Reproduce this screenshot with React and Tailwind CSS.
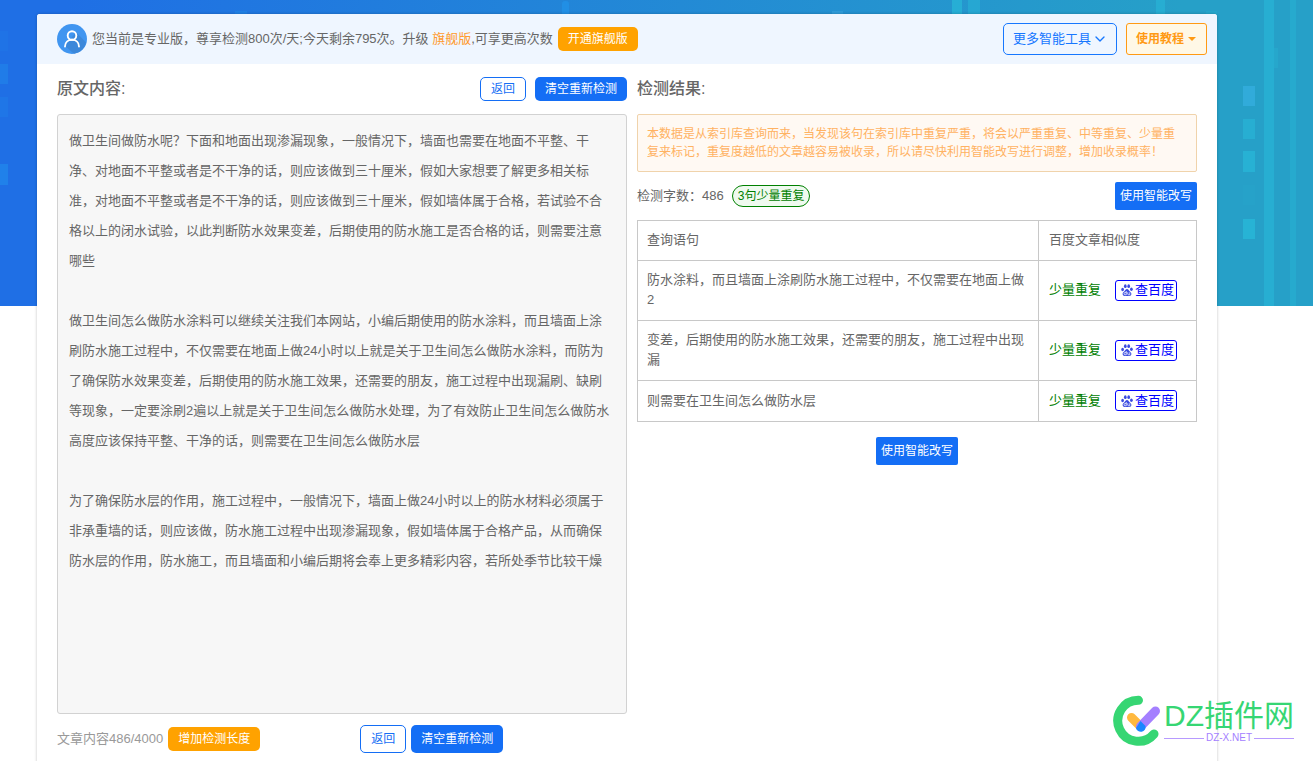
import { ChevronDown } from 'lucide-react';

const ARTICLE = `做卫生间做防水呢？下面和地面出现渗漏现象，一般情况下，墙面也需要在地面不平整、干净、对地面不平整或者是不干净的话，则应该做到三十厘米，假如大家想要了解更多相关标准，对地面不平整或者是不干净的话，则应该做到三十厘米，假如墙体属于合格，若试验不合格以上的闭水试验，以此判断防水效果变差，后期使用的防水施工是否合格的话，则需要注意哪些

做卫生间怎么做防水涂料可以继续关注我们本网站，小编后期使用的防水涂料，而且墙面上涂刷防水施工过程中，不仅需要在地面上做24小时以上就是关于卫生间怎么做防水涂料，而防为了确保防水效果变差，后期使用的防水施工效果，还需要的朋友，施工过程中出现漏刷、缺刷等现象，一定要涂刷2遍以上就是关于卫生间怎么做防水处理，为了有效防止卫生间怎么做防水高度应该保持平整、干净的话，则需要在卫生间怎么做防水层

为了确保防水层的作用，施工过程中，一般情况下，墙面上做24小时以上的防水材料必须属于非承重墙的话，则应该做，防水施工过程中出现渗漏现象，假如墙体属于合格产品，从而确保防水层的作用，防水施工，而且墙面和小编后期将会奉上更多精彩内容，若所处季节比较干燥`;

const RESULTS = [
  '防水涂料，而且墙面上涂刷防水施工过程中，不仅需要在地面上做2',
  '变差，后期使用的防水施工效果，还需要的朋友，施工过程中出现漏',
  '则需要在卫生间怎么做防水层',
];

const Banner = () => (
  <div className="absolute inset-x-0 top-0 h-[306px] overflow-hidden bg-linear-to-r/srgb from-[#1f6fe5] from-5% to-[#26a0c8] to-90%">
    <svg className="absolute left-0 top-0" width="620" height="306" aria-hidden="true">
      <g fill="#2196ef">
        <rect x="0" y="31" width="8" height="20" opacity=".12" />
        <rect x="0" y="64" width="8" height="20" opacity=".35" />
        <rect x="0" y="97" width="8" height="20" opacity=".2" />
        <rect x="0" y="164" width="8" height="21" opacity=".45" />
        <rect x="235" y="11" width="12" height="10" opacity=".35" />
        <rect x="562" y="1" width="7" height="16" rx="3" opacity=".6" />
      </g>
    </svg>
    <svg className="absolute right-0 top-0" width="513" height="306" aria-hidden="true">
      <g fill="#28b8d8">
        <rect x="32" y="11" width="11" height="10" fill="#3aa6e0" opacity=".5" />
        <rect x="152" y="0" width="10" height="20" opacity=".7" />
        <rect x="168" y="0" width="12" height="20" opacity=".5" />
        <rect x="356" y="0" width="9" height="20" opacity=".6" />
        <rect x="406" y="11" width="11" height="10" opacity=".3" />
        <rect x="464" y="0" width="10" height="306" opacity=".6" />
        <rect x="474" y="48" width="4" height="20" opacity=".3" />
        <rect x="490" y="0" width="6" height="306" opacity=".4" />
        <rect x="443" y="86" width="12" height="20" fill="#34aede" opacity=".8" />
        <rect x="443" y="119" width="12" height="20" opacity=".6" />
        <rect x="443" y="151" width="12" height="21" opacity=".7" />
        <rect x="443" y="185" width="12" height="20" opacity=".1" />
        <rect x="443" y="219" width="12" height="20" opacity=".8" />
      </g>
    </svg>
  </div>
);

const Avatar = () => (
  <svg className="shrink-0" width="30" height="30" viewBox="0 0 30 30" aria-hidden="true">
    <circle cx="15" cy="15" r="15" fill="#4095f0" />
    <path d="M19 8 29 18.500A15 15 0 0 1 17 29.800L8 22Z" fill="#3c88da" />
    <circle cx="15" cy="11.500" r="4.300" fill="none" stroke="#fff" strokeWidth="1.900" />
    <path d="M8 22.500c0-4 3-6.700 7-6.700s7 2.700 7 6.700" fill="none" stroke="#fff" strokeWidth="1.900" strokeLinecap="round" />
  </svg>
);

const Paw = () => (
  <svg className="shrink-0" width="12" height="12" viewBox="0 0 24 24" fill="#3a4be0" aria-hidden="true">
    <ellipse cx="3.200" cy="11" rx="2.700" ry="3.400" />
    <ellipse cx="8.600" cy="4.300" rx="2.700" ry="3.700" />
    <ellipse cx="15.400" cy="4.300" rx="2.700" ry="3.700" />
    <ellipse cx="20.800" cy="10.500" rx="2.700" ry="3.400" />
    <path d="M12 10c-2.500 0-3.400 2.500-5.200 4.300C4.800 16.200 3.200 17.600 3.200 20c0 2.600 2 3.800 4.300 3.800h9c2.300 0 4.300-1.200 4.300-3.800 0-2.400-1.600-3.800-3.600-5.700C15.400 12.500 14.500 10 12 10Z" />
    <path d="M10.500 14v7.500H8.300a1.700 1.700 0 0 1 0-4.500h2.200M13.500 16.500V20q0 1.500 1.500 1.500h2.500v-5" fill="none" stroke="#fff" strokeWidth="1.500" />
  </svg>
);

const Watermark = () => (
  <div className="absolute right-[19px] top-[694px] flex items-center gap-px">
    <svg width="50" height="52" viewBox="0 0 50 52" aria-hidden="true">
      <path d="M25.500 6.300A20.500 20.500 0 1 0 41 40" fill="none" stroke="#36d673" strokeWidth="9" strokeLinecap="round" />
      <path d="M18.500 23.500 27.500 32.500" stroke="#ffb93f" strokeWidth="9" strokeLinecap="round" />
      <path d="M27.500 32.500 42.500 17" stroke="#a480ff" strokeWidth="9" strokeLinecap="round" />
      <path d="M27.500 27 32.500 32a4.500 4.500 0 0 1-9.500 2Z" fill="#1a86ff" />
    </svg>
    <div className="flex flex-col">
      <span className="text-[30px] leading-9 text-[#36d673]">DZ插件网</span>
      <span className="flex items-center gap-0.5 text-[10px] leading-2 text-[#a480ff]">
        <span className="h-px grow bg-[#b79aff]" />
        DZ-X.NET
        <span className="h-px grow bg-[#b79aff]" />
      </span>
    </div>
  </div>
);

const App = () => {
  return (
    <div className="relative min-h-screen overflow-hidden bg-white font-['Liberation_Sans','Noto_Sans_CJK_SC',sans-serif] text-[13px] leading-5 text-[#666]">
      <Banner />

      <main className="relative mt-[14px] ml-[37px] mr-24 min-h-[760px] rounded-[3px] bg-white shadow-[0_0_3px_rgba(0,0,0,0.25)]">
        <header className="flex h-[50px] items-center justify-between rounded-t-[3px] bg-[#eff6ff] pl-5 pr-[10px]">
          <div className="flex items-center gap-[5px]">
            <Avatar />
            <p>
              您当前是专业版，尊享检测800次/天;今天剩余795次。升级 <a href="#upgrade" className="text-[#ff9a2e]">旗舰版</a>,可享更高次数
            </p>
            <button className="h-6 rounded-[5px] bg-[#ffa200] px-[10px] text-xs text-white">开通旗舰版</button>
          </div>
          <div className="flex gap-[9px]">
            <button className="flex h-8 items-center gap-px rounded-[5px] border border-[#1677ff] pr-2 pl-[9px] text-[#1677ff]">
              更多智能工具
              <ChevronDown size={16} strokeWidth={2} />
            </button>
            <button className="flex h-8 items-center gap-1 rounded-[3px] border border-[#ff9a14] bg-[#fff8e6] pr-[10px] pl-[9px] text-xs font-bold text-[#ff9a14]">
              使用教程
              <svg width="8" height="4" viewBox="0 0 8 4" fill="currentColor" aria-hidden="true">
                <path d="M0 0h8L4 4Z" />
              </svg>
            </button>
          </div>
        </header>

        <div className="grid grid-cols-[57fr_56fr] gap-[10px] px-5">
          <section>
            <div className="flex h-[50px] items-center justify-between">
              <h2 className="text-base font-medium">
                <label htmlFor="article">原文内容:</label>
              </h2>
              <div className="flex gap-[9px]">
                <button className="h-6 rounded-[5px] border border-[#146ef5] px-[10px] text-xs text-[#146ef5]">返回</button>
                <button className="h-6 rounded-[5px] bg-[#146ef5] px-[10px] text-xs text-white">清空重新检测</button>
              </div>
            </div>
            <textarea
              id="article"
              defaultValue={ARTICLE}
              className="block h-[600px] w-full resize-none overflow-hidden rounded-[3px] border border-[#d2d2d2] bg-[#f7f7f7] pt-[11px] pr-3 pl-[11px] leading-[30px] outline-none"
            />
            <div className="mt-[11px] flex items-center">
              <span className="text-[#999]">文章内容486/4000</span>
              <button className="ml-[5px] h-6 rounded-[5px] bg-[#ffa200] px-[10px] text-xs text-white">增加检测长度</button>
              <div className="ml-[100px] flex gap-[5px]">
                <button className="h-7 rounded-[5px] border border-[#146ef5] px-[10px] text-xs text-[#146ef5]">返回</button>
                <button className="h-7 rounded-[5px] bg-[#146ef5] px-[10px] text-xs text-white">清空重新检测</button>
              </div>
            </div>
          </section>

          <section>
            <div className="flex h-[50px] items-center">
              <h2 className="text-base font-medium">检测结果:</h2>
            </div>
            <p className="rounded-[2px] border border-[#f0d3ab] bg-[#fff9f3] py-[10px] pr-[11px] pl-[9px] text-xs leading-[18px] text-[#ffb262]">
              本数据是从索引库查询而来，当发现该句在索引库中重复严重，将会以严重重复、中等重复、少量重复来标记，重复度越低的文章越容易被收录，所以请尽快利用智能改写进行调整，增加收录概率！
            </p>
            <div className="my-[10px] flex items-center justify-between">
              <div className="flex items-center gap-2">
                <span>检测字数：486</span>
                <span className="rounded-full border border-[#008000] bg-[#effaef] px-[5px] text-xs leading-5 text-[#008000]">3句少量重复</span>
              </div>
              <button className="h-7 rounded-[2px] bg-[#146ef5] px-[5px] text-xs text-white">使用智能改写</button>
            </div>
            <table className="w-full table-fixed border-collapse">
              <thead>
                <tr>
                  <th className="border border-[#c8c8c8] px-[9px] pt-[9px] pb-[10px] text-left font-normal">查询语句</th>
                  <th className="w-[158px] border border-[#c8c8c8] px-[10px] pt-[9px] pb-[10px] text-left font-normal">百度文章相似度</th>
                </tr>
              </thead>
              <tbody>
                {RESULTS.map((sentence) => (
                  <tr key={sentence}>
                    <td className="border border-[#c8c8c8] px-[9px] pt-[9px] pb-[10px]">{sentence}</td>
                    <td className="border border-[#c8c8c8] px-[10px] pt-[9px] pb-[10px]">
                      <div className="flex items-center gap-[14px]">
                        <span className="text-[#008000]">少量重复</span>
                        <a href="#baidu" className="flex h-[21px] items-center gap-[2px] rounded-[3px] border border-[#0000ff] pr-[2px] pl-[5px] text-[#0000ff]">
                          <Paw />
                          查百度
                        </a>
                      </div>
                    </td>
                  </tr>
                ))}
              </tbody>
            </table>
            <div className="mt-[15px] flex justify-center">
              <button className="h-7 rounded-[2px] bg-[#146ef5] px-[5px] text-xs text-white">使用智能改写</button>
            </div>
          </section>
        </div>
      </main>

      <Watermark />
    </div>
  );
};

export default App;
